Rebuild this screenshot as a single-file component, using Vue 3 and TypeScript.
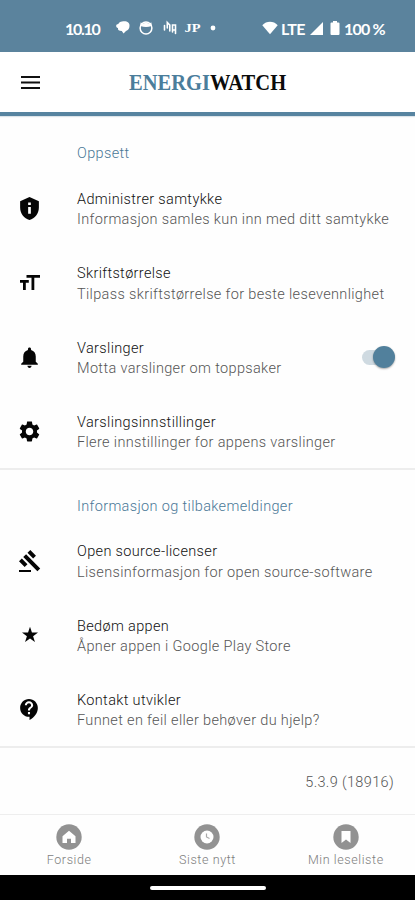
<script setup lang="ts">
import { ref } from 'vue'

interface Item {
  id: string
  title: string
  sub: string
  path: string
  size: number
  toggle?: boolean
}
interface Section {
  heading: string
  items: Item[]
}

const enabled = ref(true)

const sections: Section[] = [
  {
    heading: 'Oppsett',
    items: [
      {
        id: 'consent', title: 'Administrer samtykke', sub: 'Informasjon samles kun inn med ditt samtykke', size: 25,
        path: 'M12 1L3 5v6c0 5.55 3.84 10.74 9 12 5.16-1.26 9-6.45 9-12V5l-9-4zm1.3 16h-2.6v-6.5h2.6V17zm0-8.3h-2.6V6.2h2.6v2.5z',
      },
      {
        id: 'font', title: 'Skriftstørrelse', sub: 'Tilpass skriftstørrelse for beste lesevennlighet', size: 24,
        path: 'M8.5 4v2.8h5V19h2.8V6.8H22V4H8.5zM2 11.8h3V19h2.8v-7.2h3V9H2v2.8z',
      },
      {
        id: 'alerts', title: 'Varslinger', sub: 'Motta varslinger om toppsaker', size: 25, toggle: true,
        path: 'M12 22c1.1 0 2-.9 2-2h-4c0 1.1.89 2 2 2zm6-6v-5c0-3.07-1.64-5.64-4.5-6.32V4c0-.83-.67-1.5-1.5-1.5s-1.5.67-1.5 1.5v.68C7.63 5.36 6 7.92 6 11v5l-2 2v1h16v-1l-2-2z',
      },
      {
        id: 'alert-settings', title: 'Varslingsinnstillinger', sub: 'Flere innstillinger for appens varslinger', size: 25,
        path: 'M19.14 12.94c.04-.3.06-.61.06-.94 0-.32-.02-.64-.07-.94l2.03-1.58c.18-.14.23-.41.12-.61l-1.92-3.32c-.12-.22-.37-.29-.59-.22l-2.39.96c-.5-.38-1.03-.7-1.62-.94l-.36-2.54c-.04-.24-.24-.41-.48-.41h-3.84c-.24 0-.43.17-.47.41l-.36 2.54c-.59.24-1.13.57-1.62.94l-2.39-.96c-.22-.08-.47 0-.59.22L2.74 8.87c-.12.21-.08.47.12.61l2.03 1.58c-.05.3-.09.63-.09.94s.02.64.07.94l-2.03 1.58c-.18.14-.23.41-.12.61l1.92 3.32c.12.22.37.29.59.22l2.39-.96c.5.38 1.03.7 1.62.94l.36 2.54c.05.24.24.41.48.41h3.84c.24 0 .44-.17.47-.41l.36-2.54c.59-.24 1.13-.56 1.62-.94l2.39.96c.22.08.47 0 .59-.22l1.92-3.32c.12-.22.07-.47-.12-.61l-2.01-1.58zM12 15.6c-1.98 0-3.6-1.62-3.6-3.6s1.62-3.6 3.6-3.6 3.6 1.62 3.6 3.6-1.62 3.6-3.6 3.6z',
      },
    ],
  },
  {
    heading: 'Informasjon og tilbakemeldinger',
    items: [
      {
        id: 'licenses', title: 'Open source-licenser', sub: 'Lisensinformasjon for open source-software', size: 24,
        path: 'M1 21h12v2H1zM5.245 8.07l2.83-2.827 14.14 14.142-2.828 2.828zM12.317 1l5.657 5.656-2.83 2.83-5.654-5.66zM3.825 9.485l5.657 5.657-2.828 2.828-5.657-5.657z',
      },
      {
        id: 'rate', title: 'Bedøm appen', sub: 'Åpner appen i Google Play Store', size: 24,
        path: 'M12 3.8l1.95 5.8H20l-4.9 3.7 1.85 5.8L12 15.6l-4.95 3.5 1.85-5.8L4 9.6h6.05z',
      },
      {
        id: 'contact', title: 'Kontakt utvikler', sub: 'Funnet en feil eller behøver du hjelp?', size: 25,
        path: 'M11.5 2C6.81 2 3 5.81 3 10.5S6.81 19 11.5 19h.5v3c4.86-2.34 8-7 8-11.5C20 5.81 16.19 2 11.5 2zm1 14.5h-2v-2h2v2zm0-3.5h-2c0-3.25 3-3 3-5 0-1.1-.9-2-2-2s-2 .9-2 2h-2c0-2.21 1.79-4 4-4s4 1.79 4 4c0 2.5-3 2.75-3 5z',
      },
    ],
  },
]

const tabs = [
  { label: 'Forside', icon: 'home' },
  { label: 'Siste nytt', icon: 'clock' },
  { label: 'Min leseliste', icon: 'bookmark' },
]
</script>

<template>
  <div class="screen">
    <div class="status">
      <span class="time">10.10</span>
      <svg class="notes" width="105" height="20" viewBox="0 0 105 20" fill="#fff">
        <path d="M7 3.5c4.5-1 8 1 7.500 4.500 0 2.500-1.500 4.400-3.500 5L8.500 15.500 6.800 13C4 13 2.500 12 3 10 .5 9.500.5 6 3.300 6 4 4.500 5.200 3.800 7 3.500z" />
        <circle cx="31" cy="10" r="5.900" fill="none" stroke="#fff" stroke-width="1.500" />
        <path d="M25.500 8V4.500l3 1 2.500-1 2.500 1 3-1V8q-5.500 2-11 0z" />
        <path d="M49.500 12V7.500M52.300 10V4.500l2.500 2.500v6M57.500 14V7h3v8.500M57.500 12h3" fill="none" stroke="#fff" stroke-width="1.600" stroke-linecap="round" />
        <text x="69.500" y="14" class="jp" textLength="16" lengthAdjust="spacingAndGlyphs">JP</text>
        <circle cx="98" cy="10" r="2.400" />
      </svg>
      <svg class="wifi" width="16" height="14" viewBox="0 0 16 14" fill="#fff"><path d="M.3 4.300C4.500-.3 11.500-.3 15.700 4.300L8 13.300z" /></svg>
      <span class="lte">LTE</span>
      <svg class="signal" width="13" height="13" viewBox="0 0 13 13" fill="#fff"><path d="M13 0v13H0z" /></svg>
      <svg class="battery" width="10" height="14" viewBox="0 0 10 14" fill="#fff"><path d="M3 0h4v1.500h1.500Q9.500 1.500 9.500 2.500v10.500q0 1-1 1h-7q-1 0-1-1V2.500q0-1 1-1H3z" /></svg>
      <span class="percent">100 %</span>
    </div>

    <header class="appbar">
      <svg class="menu" width="19" height="13" viewBox="0 0 19 13"><path d="M0 1h19M0 6.500h19M0 12h19" stroke="#111" stroke-width="2" /></svg>
      <div class="logo"><span class="energi">ENERGI</span><span>WATCH</span></div>
    </header>

    <main>
      <section v-for="s in sections" :key="s.heading">
        <h2>{{ s.heading }}</h2>
        <div v-for="i in s.items" :key="i.id" class="row">
          <div class="glyph">
            <svg :width="i.size" :height="i.size" viewBox="0 0 24 24"><path :d="i.path" fill="#050505" /></svg>
          </div>
          <div class="copy">
            <div class="title">{{ i.title }}</div>
            <div class="sub">{{ i.sub }}</div>
          </div>
          <button v-if="i.toggle" class="switch" :class="{ on: enabled }" role="switch" :aria-checked="enabled" @click="enabled = !enabled"><span class="thumb"></span></button>
        </div>
      </section>
      <div class="version">5.3.9 (18916)</div>
    </main>

    <nav>
      <div v-for="t in tabs" :key="t.icon" class="tab">
        <svg width="26" height="26" viewBox="0 0 26 26">
          <circle cx="13" cy="13" r="12.700" fill="#929292" />
          <path v-if="t.icon === 'home'" d="M13 6.800l6.500 5.500V19h-4.500v-4.200h-4V19H6.500v-6.700z" fill="#fff" />
          <template v-else-if="t.icon === 'clock'">
            <circle cx="13" cy="13" r="6.500" fill="#fff" />
            <path d="M12.500 9.500V13l3 1.500" fill="none" stroke="#aaa" stroke-width="1.200" />
          </template>
          <path v-else d="M8.500 7h9v12L13 15.500 8.500 19z" fill="#fff" />
        </svg>
        <span>{{ t.label }}</span>
      </div>
    </nav>
    <div class="gesture"><span></span></div>
  </div>
</template>

<style>
body { margin: 0; background: #fff; }
</style>

<style scoped>
.screen { width: 415px; height: 900px; display: flex; flex-direction: column; background: #fefefe; font-family: Roboto, "Liberation Sans", sans-serif; overflow: hidden; }
.status { height: 52px; box-sizing: border-box; padding: 4px 0 0 65px; background: #5b839d; color: #fff; display: flex; align-items: center; flex: none; font: 700 16px Lato, sans-serif; white-space: nowrap; }
.time { width: 50px; letter-spacing: -1.3px; }
.notes { flex: none; }
.jp { font: bold 13px "Liberation Serif", serif; letter-spacing: 0; }
.wifi { margin-left: 42px; flex: none; }
.lte { width: 29px; margin-left: 3px; letter-spacing: -0.6px; }
.signal { flex: none; }
.battery { margin-left: 7px; flex: none; }
.percent { margin-left: 4px; letter-spacing: -0.8px; }
.appbar { height: 64px; box-sizing: border-box; flex: none; display: flex; align-items: center; padding-left: 21px; background: #fff; border-bottom: 4px solid #5784a0; box-shadow: 0 1px 1px #dce4e9; }
.menu { flex: none; }
.logo { margin-left: 89px; padding-top: 1px; font: bold 23px/24px "Liberation Serif", serif; color: #0b0b0b; transform: scaleX(0.893); transform-origin: left center; }
.energi { color: #4b7d9b; }
main { flex: 1; min-height: 0; }
section { padding-top: 19px; border-bottom: 2px solid #ededed; }
section + section { padding-top: 17.5px; }
h2 { height: 36px; margin: 0; padding-left: 77px; line-height: 37px; font-size: 14.5px; font-weight: 300; letter-spacing: 0.35px; color: #4a7897; }
.row { height: 74.5px; display: flex; align-items: center; }
.row:last-child { height: 73.5px; }
.glyph { width: 59px; padding-right: 1px; display: flex; justify-content: center; flex: none; }
.copy { margin-left: 17px; padding-top: 4px; white-space: nowrap; font-size: 14.5px; font-weight: 300; letter-spacing: 0.35px; line-height: 20.5px; }
.title { color: #111; }
.sub { color: #555; }
.switch { width: 33px; height: 22px; padding: 0; border: 0; background: none; margin: 0 20px 0 auto; display: flex; align-items: center; }
.switch::before { content: ""; width: 28px; height: 15px; border-radius: 8px; background: #cfdae1; flex: none; }
.thumb { width: 22px; height: 22px; border-radius: 50%; margin-left: -28px; background: #f4f4f4; box-shadow: 0 1px 2px #0005; flex: none; }
.on .thumb { margin-left: -17px; background: #51809c; }
.version { height: 66px; line-height: 69px; padding-right: 21px; text-align: right; font-size: 14.5px; font-weight: 300; letter-spacing: 0.35px; color: #555; }
nav { height: 61px; box-sizing: border-box; border-top: 1px solid #eee; padding: 0; flex: none; display: grid; grid-template-columns: repeat(3, 1fr); background: #fefefe; }
.tab { display: flex; flex-direction: column; align-items: center; padding-top: 9px; font-size: 12.5px; font-weight: 300; line-height: 20px; letter-spacing: 0.6px; color: #7d7d7d; }
.gesture { height: 25px; flex: none; background: #000; display: flex; justify-content: center; align-items: center; }
.gesture span { width: 116px; height: 4px; border-radius: 2px; background: #fff; }
</style>
